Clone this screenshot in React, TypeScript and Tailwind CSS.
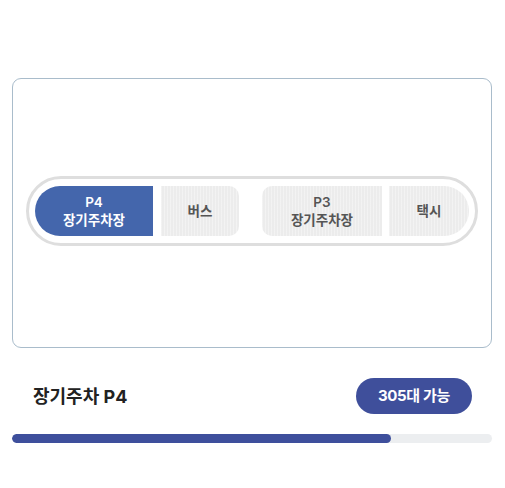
import React from "react";

const stripe =
  "bg-[#ececec] bg-[repeating-linear-gradient(90deg,rgba(255,255,255,0.35)_0px,rgba(255,255,255,0.35)_1px,transparent_1px,transparent_3px)]";

export default function App() {
  return (
    <div
      className="w-[505px] h-[488px] bg-white flex flex-col"
      style={{ fontFamily: 'Inter, "Noto Sans CJK KR", sans-serif' }}
    >
      <div className="mt-[78px] ml-[12px] w-[480px] h-[270px] rounded-[9px] border border-[#a9bccb] flex items-center justify-center pb-[4px]">
        <div className="w-[452px] h-[70px] rounded-full border-[3px] border-[#dedede] px-[6px] py-[7px] flex items-center">
          <div className="w-[118px] h-[50px] rounded-l-full bg-[#4466ac] text-white flex flex-col items-center justify-center text-[13.5px] font-semibold leading-[18px]">
            <span>P4</span>
            <span>장기주차장</span>
          </div>
          <div className={`ml-[8px] w-[78px] h-[50px] rounded-r-[10px] ${stripe} text-[#555] flex items-center justify-center text-[13.5px] font-semibold`}>
            버스
          </div>
          <div className={`ml-[23px] w-[120px] h-[50px] rounded-l-[10px] ${stripe} text-[#555] flex flex-col items-center justify-center text-[13.5px] font-semibold leading-[18px]`}>
            <span>P3</span>
            <span>장기주차장</span>
          </div>
          <div className={`ml-[7px] w-[80px] h-[50px] rounded-r-full ${stripe} text-[#555] flex items-center justify-center text-[13.5px] font-semibold`}>
            택시
          </div>
        </div>
      </div>
      <div className="mt-[30px] ml-[12px] w-[480px] flex items-center justify-between">
        <span className="ml-[21px] text-[18px] font-bold text-[#222]">장기주차 P4</span>
        <span className="mr-[20px] w-[116px] h-[36px] rounded-full bg-[#3f4f9b] text-white text-[15px] font-bold flex items-center justify-center tracking-[-0.3px]">
          305대 가능
        </span>
      </div>
      <div className="mt-[20px] ml-[12px] w-[480px] h-[9px] rounded-full bg-[#eceef0] overflow-hidden">
        <div className="h-full w-[379px] rounded-full bg-[#3e4f9c]" />
      </div>
    </div>
  );
}
